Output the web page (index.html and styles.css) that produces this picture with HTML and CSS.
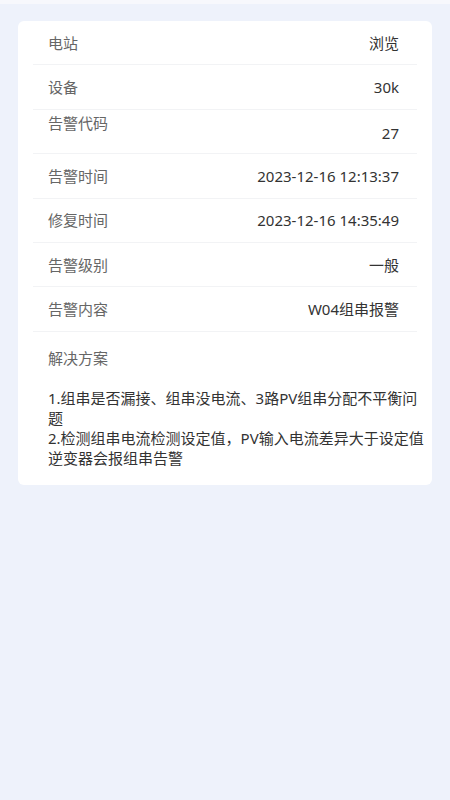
FILE: index.html
```html
<!DOCTYPE html>
<html lang="zh">
<head>
<meta charset="utf-8">
<title>告警详情</title>
<link rel="stylesheet" href="styles.css">
</head>
<body>
<div class="topstrip"></div>
<main class="page">
  <section class="card">
    <div class="row"><span class="label">电站</span><span class="value">浏览</span></div>
    <div class="row"><span class="label">设备</span><span class="value">30k</span></div>
    <div class="row row--top"><span class="label">告警代码</span><span class="value">27</span></div>
    <div class="row"><span class="label">告警时间</span><span class="value">2023-12-16 12:13:37</span></div>
    <div class="row"><span class="label">修复时间</span><span class="value">2023-12-16 14:35:49</span></div>
    <div class="row"><span class="label">告警级别</span><span class="value">一般</span></div>
    <div class="row"><span class="label">告警内容</span><span class="value">W04组串报警</span></div>
    <div class="solution">
      <div class="label">解决方案</div>
      <div class="solution-text">1.组串是否漏接、组串没电流、3路PV组串分配不平衡问题<br>2.检测组串电流检测设定值，PV输入电流差异大于设定值逆变器会报组串告警</div>
    </div>
  </section>
</main>
</body>
</html>
```
FILE: styles.css
```css
html, body {
  margin: 0;
  padding: 0;
}
body {
  background: #eef2fb;
  font-family: "Noto Sans", "Noto Sans CJK SC", sans-serif;
  font-size: 15px;
  line-height: 20px;
  color: #333;
  min-height: 800px;
}
.topstrip {
  height: 4px;
  background: #f7f8fc;
}
.page {
  padding: 17px 18px 0 18px;
}
.card {
  background: #fff;
  border-radius: 6px;
  overflow: hidden;
}
.row {
  box-sizing: border-box;
  height: 44.4px;
  margin: 0 15px;
  padding: 0 18px 0 15px;
  border-bottom: 1px solid #f2f3f5;
  display: flex;
  justify-content: space-between;
  align-items: center;
}
.label {
  color: #666;
}
.value {
  color: #333;
}
.row--top .label {
  align-self: flex-start;
  padding-top: 3px;
}
.row--top .value {
  padding-top: 3px;
}
.solution {
  padding: 16px 6px 17px 30px;
}
.solution-text {
  margin-top: 20px;
  color: #333;
}
```
